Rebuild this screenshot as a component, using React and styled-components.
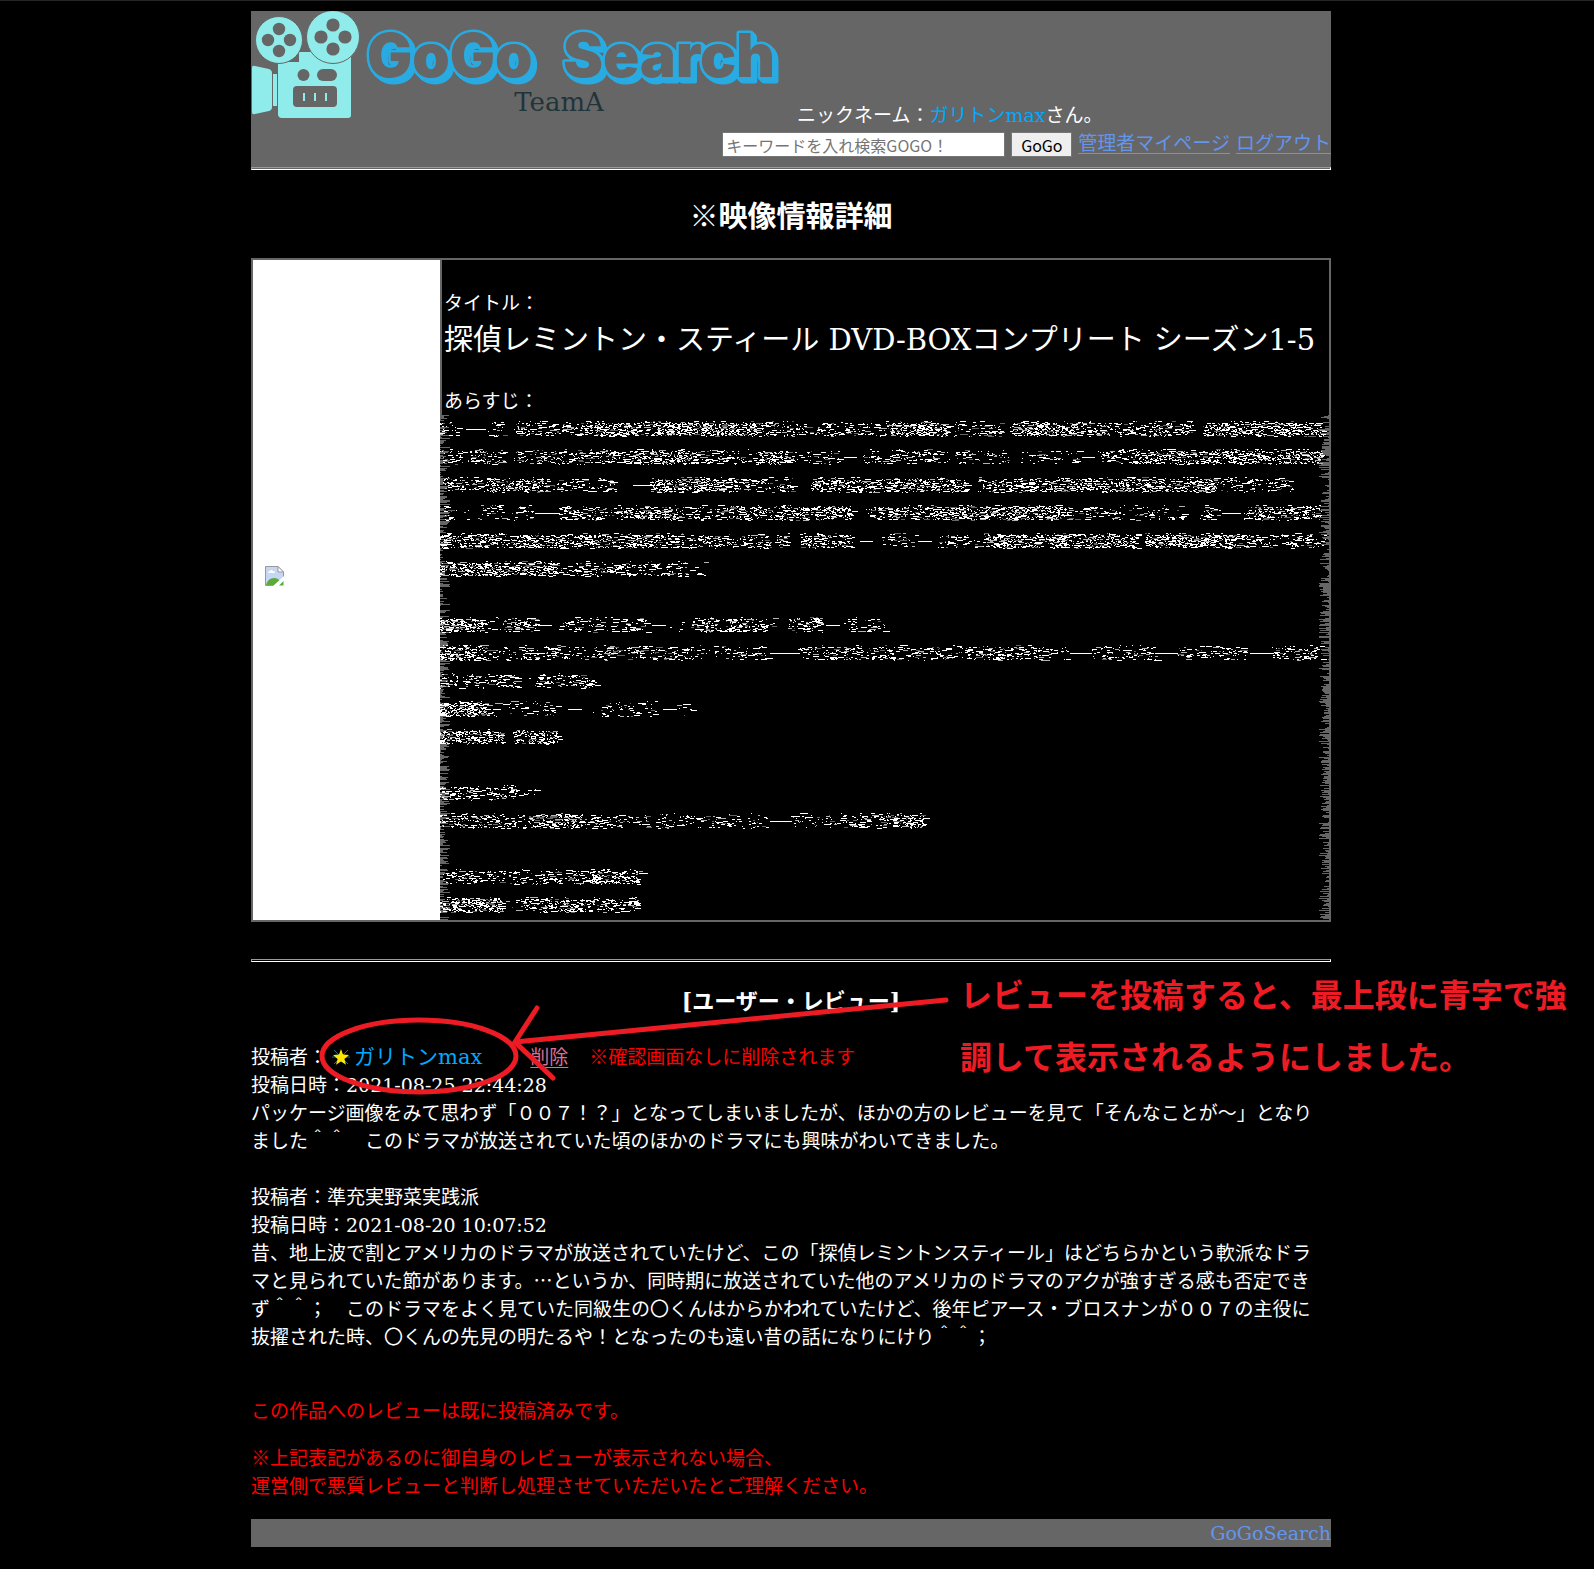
import React from "react";
import styled, { createGlobalStyle } from "styled-components";

const SERIF = '"DejaVu Serif", "Noto Sans CJK JP", sans-serif';
const SANS = '"Noto Sans CJK JP", sans-serif';

const GlobalStyle = createGlobalStyle`
  body {
    margin: 0;
    background: #000;
    color: #fff;
    font-family: ${SERIF};
    font-size: 19px;
    line-height: 28px;
    text-spacing-trim: space-all;
  }
`;

const Page = styled.div`
  border-top: 1px solid #262626;
  padding: 10px 12px 22px 0;
  overflow-x: hidden;
`;
const Container = styled.div`
  max-width: 1080px;
  margin: 0 auto;
`;
const Header = styled.header`
  background: #666;
`;
const Brand = styled.div`
  display: flex;
  align-items: flex-end;
`;
const Logo = styled.svg`
  display: block;
  flex: none;
`;
const Wordmark = styled.g`
  fill: #666;
  stroke: #29abe2;
  stroke-width: 5px;
  stroke-linejoin: round;
  paint-order: stroke;
  font: 900 60px Inter, sans-serif;
  filter: drop-shadow(1px 1px 0 #29abe2) drop-shadow(1px 1px 0 #29abe2)
    drop-shadow(1px 1px 0 #29abe2) drop-shadow(1px 1px 0 #29abe2);
`;
const Name = styled.span`
  color: #00aaff;
  font-size: ${(p) => (p.$large ? "21px" : "19px")};
`;
const SearchBar = styled.form`
  display: flex;
  justify-content: flex-end;
  align-items: flex-end;
  gap: 6px;
  margin-bottom: 10px;
`;
const SearchInput = styled.input`
  box-sizing: border-box;
  width: 283px;
  height: 25px;
  padding: 0 3px;
  border: 1px solid #767676;
  background: #fff;
  font: 16px/22px ${SANS};
  &::placeholder {
    color: #757575;
  }
`;
const SearchButton = styled.button`
  box-sizing: border-box;
  width: 61px;
  height: 25px;
  padding: 0;
  border: 1px solid #767676;
  border-radius: 1px;
  background: #efefef;
  color: #000;
  font: 16px/22px ${SANS};
`;
const Link = styled.a`
  color: ${(p) => (p.$danger ? "#db7093" : "#6495ed")};
  text-decoration: ${(p) => (p.$plain ? "none" : "underline")};
  text-underline-offset: 3px;
  text-decoration-thickness: 1px;
`;
const Rule = styled.hr`
  height: 1px;
  margin: 0;
  border: 1px solid;
  border-color: #999 #fff #fff #999;
`;
const PageTitle = styled.h1`
  margin: 26px 0 20px;
  font-size: 29px;
  line-height: 42px;
  text-align: center;
`;
const Detail = styled.section`
  display: grid;
  grid-template-columns: 187px 1fr;
  border: 2px solid #666;
  margin-bottom: 37px;
`;
const Cover = styled.div`
  display: flex;
  align-items: center;
  padding: 0 12px 28px;
  background: #fff;
`;
const Facts = styled.div`
  padding: 29px 0 0 2px;
  border-left: 2px solid #666;
`;
const FactTitle = styled.div`
  margin-bottom: 24px;
  font-size: 29px;
  line-height: 46px;
`;
const Synopsis = styled.svg`
  display: block;
  width: 100%;
  height: auto;
`;
const Reviews = styled.section`
  position: relative;
`;
const ReviewsTitle = styled.h2`
  margin: 0;
  padding: 23px 0 26px;
  font-size: 22px;
  line-height: 32px;
  text-align: center;
`;
const Review = styled.article`
  margin-bottom: 28px;
`;
const Author = styled.div`
  display: flex;
  align-items: center;
  height: 28px;
`;
const Star = styled.svg`
  margin: 0 4px 0 5px;
`;
const Delete = styled.span`
  margin: 0 21px 0 48px;
`;
const Text = styled.p`
  margin: 0;
  padding-right: 12px;
`;
const Ellipsis = styled.span`
  font-family: ${SANS};
  line-height: 0;
`;
const Warning = styled.p`
  margin: 0 0 19px;
  color: #f00;
`;
const Notices = styled.div`
  padding-top: 18px;
`;
const WarningInline = styled.span`
  color: #f00;
`;
const Footer = styled.footer`
  background: #666;
  text-align: right;
`;
const Marks = styled.svg`
  position: absolute;
  top: 0;
  left: 0;
  overflow: visible;
  pointer-events: none;
`;
const Callout = styled.p`
  position: absolute;
  top: 0;
  left: 709px;
  margin: 0;
  color: #ed1c24;
  font: bold 32px/62px ${SANS};
  white-space: nowrap;
`;

/* Each row: [line number, [from, to, density]...]; density 0 is one solid stroke. */
const ROWS = [
  [0, [0, 20, 0.4], [26, 46, 0], [46, 66, 0.3], [76, 140, 0.5], [140, 200, 0.9], [200, 215, 0.6], [215, 320, 1], [320, 450, 0.5], [450, 510, 1], [515, 563, 0.5], [572, 640, 1], [640, 755, 0.65], [765, 886, 0.85]],
  [1, [0, 66, 0.5], [76, 190, 0.6], [190, 260, 0.9], [260, 320, 0.5], [320, 350, 0.9], [350, 402, 0.4], [404, 417, 0], [425, 490, 0.5], [490, 572, 0.35], [583, 640, 0.3], [642, 655, 0], [660, 690, 0.5], [690, 884, 0.85]],
  [2, [5, 50, 0.5], [50, 110, 0.8], [110, 180, 0.4], [193, 215, 0], [212, 300, 0.9], [300, 356, 0.6], [372, 530, 0.75], [540, 620, 0.7], [620, 780, 0.8], [780, 856, 0.4]],
  [3, [3, 20, 0.3], [25, 35, 0.1], [40, 95, 0.35], [95, 120, 0], [120, 185, 0.5], [185, 240, 0.85], [240, 280, 0.35], [280, 340, 0.6], [340, 415, 0.85], [428, 510, 0.6], [510, 625, 0.95], [625, 745, 0.4], [762, 782, 0.3], [782, 801, 0], [806, 884, 0.7]],
  [4, [0, 225, 0.8], [225, 352, 0.55], [362, 415, 0.7], [420, 433, 0], [443, 478, 0.3], [478, 492, 0], [500, 540, 0.4], [545, 700, 0.85], [707, 800, 0.9], [800, 888, 0.5]],
  [5, [0, 120, 0.9], [120, 190, 0.65], [190, 252, 0.45], [252, 268, 0.05]],
  [7, [0, 45, 1], [45, 65, 0.2], [65, 98, 0.6], [98, 112, 0], [120, 145, 0.4], [150, 210, 0.45], [212, 226, 0], [232, 245, 0.08], [252, 330, 0.6], [332, 336, 0.3], [350, 386, 0.6], [386, 400, 0], [405, 447, 0.4]],
  [8, [0, 50, 0.9], [50, 100, 0.4], [85, 105, 0], [105, 330, 0.42], [330, 360, 0], [360, 630, 0.48], [630, 652, 0], [652, 718, 0.45], [715, 738, 0], [738, 808, 0.4], [810, 834, 0], [834, 884, 0.5]],
  [9, [0, 80, 0.5], [84, 92, 0.1], [97, 158, 0.55]],
  [10, [0, 50, 1], [50, 122, 0.3], [128, 142, 0], [150, 156, 0.2], [158, 218, 0.4], [223, 237, 0], [234, 257, 0.15]],
  [11, [0, 65, 0.9], [66, 73, 0.1], [75, 120, 0.85], [120, 132, 0.12]],
  [13, [0, 45, 0.45], [48, 82, 0.5], [84, 98, 0.12]],
  [14, [0, 90, 0.6], [90, 145, 0.9], [145, 210, 0.42], [215, 330, 0.4], [330, 352, 0], [352, 440, 0.45], [440, 486, 0.9]],
  [16, [3, 60, 0.4], [60, 150, 0.45], [150, 202, 0.8]],
  [17, [0, 65, 1], [68, 80, 0.2], [82, 200, 0.7]],
];

function buildNoise() {
  let seed = 20210825;
  const rand = () => {
    seed = (seed * 1664525 + 1013904223) % 4294967296;
    return seed / 4294967296;
  };
  const tones = ["", "", ""];
  let edge = "";
  ROWS.forEach(([line, ...segments]) => {
    const mid = line * 28 + 14;
    segments.forEach(([from, to, density]) => {
      if (density === 0) {
        tones[0] += `M${from} ${mid}h${to - from}`;
        return;
      }
      for (let dy = -8; dy <= 7; dy += 1) {
        const fade = dy < -6 || dy > 6 ? 0.35 : 1;
        let x = from + rand() * 6 - 2;
        while (x < to - 2) {
          const len = 1 + Math.floor(rand() * rand() * 9);
          if (rand() < density * 0.88 * fade) {
            const t = rand();
            const tone = t < 0.72 ? 0 : t < 0.88 ? 1 : 2;
            tones[tone] += `M${Math.max(0, Math.floor(x))} ${mid + dy}h${len}`;
          }
          x += len + 1 + rand() * 2.5;
        }
      }
    });
  });
  for (let y = 0; y < 505; y += 1) {
    if (rand() < 0.68) edge += `M0 ${y}h${1 + Math.floor(rand() * 10)}`;
    if (rand() < 0.68) {
      const len = 1 + Math.floor(rand() * 10);
      edge += `M${889 - len} ${y}h${len}`;
    }
  }
  return { tones, edge };
}

const NOISE = buildNoise();
const TONE_COLORS = ["#fff", "#b4b4b4", "#666"];

function SynopsisNoise() {
  return (
    <Synopsis viewBox="0 -0.5 889 505" shapeRendering="crispEdges" aria-hidden="true">
      <path d={NOISE.edge} stroke="#666" />
      {NOISE.tones.map((d, i) => (
        <path key={TONE_COLORS[i]} d={d} stroke={TONE_COLORS[i]} />
      ))}
    </Synopsis>
  );
}

const Reel = ({ cx, cy, r, hole, offset }) => (
  <g>
    <circle cx={cx} cy={cy} r={r} fill="#90ecea" stroke="#666" strokeWidth="1" />
    <g fill="#666">
      <circle cx={cx} cy={cy - offset} r={hole} />
      <circle cx={cx} cy={cy + offset} r={hole} />
      <circle cx={cx - offset} cy={cy} r={hole} />
      <circle cx={cx + offset} cy={cy} r={hole} />
    </g>
  </g>
);

function LogoArt() {
  return (
    <Logo width="546" height="118" viewBox="0 0 546 118" role="img" aria-label="GoGo Search TeamA">
      <path d="M1 57q0-3 3-2l14 3q3 1 3 4v34q0 3-3 4l-14 3q-3 1-3-2z" fill="#90ecea" />
      <rect x="22" y="63" width="4" height="32" fill="#90ecea" />
      <path d="M27 51h21V41h15v-1h37v64q0 3-3 3H31q-4 0-4-4z" fill="#90ecea" />
      <Reel cx={28} cy={29} r={23.5} hole={6.2} offset={11} />
      <Reel cx={82} cy={26} r={26.5} hole={6.6} offset={12} />
      <g fill="#666">
        <circle cx="52.5" cy="64" r="6" />
        <rect x="66" y="58" width="20" height="12" rx="6" />
        <rect x="42" y="75" width="44" height="21" rx="4" />
      </g>
      <path d="M53 82v8M64 82v8M75 82v8" stroke="#90ecea" strokeWidth="2" />
      <Wordmark>
        <text x="116" y="66">GoGo</text>
        <text x="312" y="66">Search</text>
      </Wordmark>
      <text x="308" y="100" textAnchor="middle" fontFamily="DejaVu Serif, serif" fontSize="26" fill="#1f3539">
        TeamA
      </text>
    </Logo>
  );
}

function BrokenImage() {
  return (
    <svg width="19" height="20" viewBox="0 0 19 20" aria-hidden="true">
      <path d="M.5.5H13l5.500 5.500v13.500H.5z" fill="#c6d6f5" stroke="#999" />
      <path d="M3 7q0-2 2-2 1-2 3 0 2 0 2 2z" fill="#fff" />
      <path d="M1 19q2-7 8-7 4 0 6 3l-4 4z" fill="#5aab3a" />
      <path d="M13 .5V6h5.500z" fill="#fff" stroke="#999" />
      <path d="M8 20 19 10v3l-7 7zM12 20l7-7v7z" fill="#fff" />
      <path d="M14 19.500h4.500V15z" fill="#5aab3a" />
    </svg>
  );
}

function StarIcon() {
  return (
    <Star width="18" height="18" viewBox="0 0 18 18" aria-hidden="true">
      <path d="M9 9 2 2M9 9l7-7M9 9H0M9 9h9M9 9l-7 7M9 9l7 7" stroke="#1d6a86" />
      <path d="m9 1 2 5.600 6 .4-4.600 3.900 1.600 5.900L9 13.600l-5 3.200 1.600-5.900L1 7l6-.4z" fill="#ffe600" />
    </Star>
  );
}

export default function App() {
  return (
    <Page>
      <GlobalStyle />
      <Container>
        <Header>
          <Brand>
            <LogoArt />
            <div>
              ニックネーム：<Name>ガリトンmax</Name>さん。
            </div>
          </Brand>
          <SearchBar onSubmit={(e) => e.preventDefault()}>
            <SearchInput type="text" aria-label="キーワード" placeholder="キーワードを入れ検索GOGO！" />
            <SearchButton type="submit">GoGo</SearchButton>
            <Link href="#mypage">管理者マイページ</Link>
            <Link href="#logout">ログアウト</Link>
          </SearchBar>
          <Rule />
        </Header>

        <PageTitle>※映像情報詳細</PageTitle>

        <Detail>
          <Cover>
            <BrokenImage />
          </Cover>
          <div>
            <Facts>
              <div>タイトル：</div>
              <FactTitle>探偵レミントン・スティール DVD-BOXコンプリート シーズン1-5</FactTitle>
              <div>あらすじ：</div>
            </Facts>
            <SynopsisNoise />
          </div>
        </Detail>

        <Rule />

        <Reviews>
          <ReviewsTitle>[ユーザー・レビュー]</ReviewsTitle>
          <Review>
            <Author>
              投稿者：
              <StarIcon />
              <Name $large>ガリトンmax</Name>
              <Delete>
                <Link $danger href="#delete">削除</Link>
              </Delete>
              <WarningInline>※確認画面なしに削除されます</WarningInline>
            </Author>
            <div>投稿日時：2021-08-25 22:44:28</div>
            <Text>
              パッケージ画像をみて思わず「００７！？」となってしまいましたが、ほかの方のレビューを見て「そんなことが～」となりました＾＾　このドラマが放送されていた頃のほかのドラマにも興味がわいてきました。
            </Text>
          </Review>
          <Review>
            <div>投稿者：準充実野菜実践派</div>
            <div>投稿日時：2021-08-20 10:07:52</div>
            <Text>
              昔、地上波で割とアメリカのドラマが放送されていたけど、この「探偵レミントンスティール」はどちらかという軟派なドラマと見られていた節があります。<Ellipsis>…</Ellipsis>というか、同時期に放送されていた他のアメリカのドラマのアクが強すぎる感も否定できず＾＾；　このドラマをよく見ていた同級生の〇くんはからかわれていたけど、後年ピアース・ブロスナンが００７の主役に抜擢された時、〇くんの先見の明たるや！となったのも遠い昔の話になりにけり＾＾；
            </Text>
          </Review>
          <Notices>
            <Warning>この作品へのレビューは既に投稿済みです。</Warning>
            <Warning>
              ※上記表記があるのに御自身のレビューが表示されない場合、
              <br />
              運営側で悪質レビューと判断し処理させていただいたとご理解ください。
            </Warning>
          </Notices>

          <Marks width="700" height="140" viewBox="0 0 700 140" fill="none" stroke="#ed1c24" strokeWidth="5" strokeLinecap="round" aria-hidden="true">
            <ellipse cx="168" cy="94" rx="97" ry="36" />
            <path d="M695 38 264 80M286 46 264 80l38 36" />
          </Marks>
          <Callout>
            レビューを投稿すると、最上段に青字で強
            <br />
            調して表示されるようにしました。
          </Callout>
        </Reviews>

        <Footer>
          <Link $plain href="#top">GoGoSearch</Link>
        </Footer>
      </Container>
    </Page>
  );
}
